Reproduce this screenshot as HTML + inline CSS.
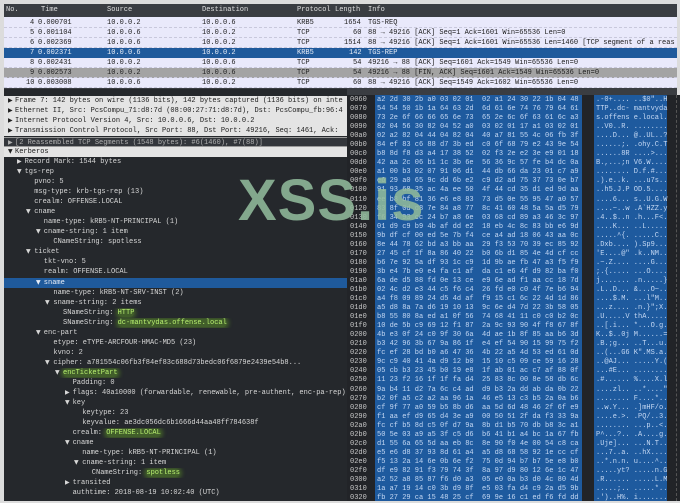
<!DOCTYPE html>
<html><head><meta charset="utf-8"><style>
*{margin:0;padding:0;box-sizing:border-box}
body{width:680px;height:501px;overflow:hidden;background:#dcdcdc;position:relative;font-family:"Liberation Mono","DejaVu Sans Mono",monospace;font-size:7px}
.abs{position:absolute;white-space:pre}
#plist{position:absolute;left:4px;top:4px;width:673px;height:85px;background:#e9e9fb}
#phdr{position:absolute;left:0;top:0;width:673px;height:13px;background:#3a3d42;color:#e0e0e0}
.pr{position:absolute;left:0;width:673px;height:10px;line-height:10px;color:#202020;border-bottom:1px dashed #c8c8dc}
.pr span,#phdr span{position:absolute;white-space:pre}
#detail{position:absolute;left:4px;top:89px;width:343px;height:412px;background:#25282c}
#sb{position:absolute;left:4px;top:88px;width:673px;height:7px;background:#3a3d42}
.dr{position:absolute;left:0;width:343px;height:10.1px;line-height:10px;color:#d8d8d8;white-space:pre;overflow:hidden}
.lt{background:#e4e4e4;color:#202020}
.arr{position:absolute;font-size:6px;font-family:"DejaVu Sans",sans-serif}
#hex{position:absolute;left:347px;top:95px;width:333px;height:406px;background:#222428}
.hl{background:rgba(100,160,40,.45);color:#b8f070;border-radius:4px;box-shadow:0 0 4px 2px rgba(100,160,40,.45)}
.L0{padding-left:11px}.L1{padding-left:20.6px}.L2{padding-left:30.2px}.L3{padding-left:39.8px}.L4{padding-left:49.4px}.L5{padding-left:59px}.L6{padding-left:68.6px}.L7{padding-left:78.2px}.L8{padding-left:87.8px}
</style></head><body>
<div id="plist">
<div id="phdr" style="line-height:13px"><span style="left:2px">No.</span><span style="left:37px">Time</span><span style="left:103px">Source</span><span style="left:198px">Destination</span><span style="left:293px">Protocol</span><span style="left:331px">Length</span><span style="left:364px">Info</span></div>
<div class="pr" style="top:14px"><span style="left:26px">4</span><span style="left:34px">0.000701</span><span style="left:103px">10.0.0.2</span><span style="left:198px">10.0.0.6</span><span style="left:293px">KRB5</span><span style="left:340px">1654</span><span style="left:364px">TGS-REQ</span></div>
<div class="pr" style="top:24px"><span style="left:26px">5</span><span style="left:34px">0.001104</span><span style="left:103px">10.0.0.6</span><span style="left:198px">10.0.0.2</span><span style="left:293px">TCP</span><span style="left:349px">60</span><span style="left:364px">88 → 49216 [ACK] Seq=1 Ack=1601 Win=65536 Len=0</span></div>
<div class="pr" style="top:34px"><span style="left:26px">6</span><span style="left:34px">0.002369</span><span style="left:103px">10.0.0.6</span><span style="left:198px">10.0.0.2</span><span style="left:293px">TCP</span><span style="left:340px">1514</span><span style="left:364px">88 → 49216 [ACK] Seq=1 Ack=1601 Win=65536 Len=1460 [TCP segment of a reas</span></div>
<div class="pr" style="top:44px;background:#1f5a9c;color:#e8eef8;border:none"><span style="left:26px">7</span><span style="left:34px">0.002371</span><span style="left:103px">10.0.0.6</span><span style="left:198px">10.0.0.2</span><span style="left:293px">KRB5</span><span style="left:345px">142</span><span style="left:364px">TGS-REP</span></div>
<div class="pr" style="top:54px"><span style="left:26px">8</span><span style="left:34px">0.002431</span><span style="left:103px">10.0.0.2</span><span style="left:198px">10.0.0.6</span><span style="left:293px">TCP</span><span style="left:349px">54</span><span style="left:364px">49216 → 88 [ACK] Seq=1601 Ack=1549 Win=65536 Len=0</span></div>
<div class="pr" style="top:64px;background:#a3a3a3"><span style="left:26px">9</span><span style="left:34px">0.002573</span><span style="left:103px">10.0.0.2</span><span style="left:198px">10.0.0.6</span><span style="left:293px">TCP</span><span style="left:349px">54</span><span style="left:364px">49216 → 88 [FIN, ACK] Seq=1601 Ack=1549 Win=65536 Len=0</span></div>
<div class="pr" style="top:74px"><span style="left:22px">10</span><span style="left:34px">0.003008</span><span style="left:103px">10.0.0.6</span><span style="left:198px">10.0.0.2</span><span style="left:293px">TCP</span><span style="left:349px">60</span><span style="left:364px">88 → 49216 [ACK] Seq=1549 Ack=1602 Win=65536 Len=0</span></div>
</div>
<div id="sb"></div>
<div id="detail">
<div class="dr lt L0" style="top:7px"><span class="arr" style="left:4px">▶</span>Frame 7: 142 bytes on wire (1136 bits), 142 bytes captured (1136 bits) on inte</div>
<div class="dr lt L0" style="top:17px"><span class="arr" style="left:4px">▶</span>Ethernet II, Src: PcsCompu_71:d8:7d (08:00:27:71:d8:7d), Dst: PcsCompu_fb:96:4</div>
<div class="dr lt L0" style="top:27px"><span class="arr" style="left:4px">▶</span>Internet Protocol Version 4, Src: 10.0.0.6, Dst: 10.0.0.2</div>
<div class="dr lt L0" style="top:37px"><span class="arr" style="left:4px">▶</span>Transmission Control Protocol, Src Port: 88, Dst Port: 49216, Seq: 1461, Ack:</div>
<div class="dr L0" style="top:48px;background:#33363b;color:#b0b0b0;border-top:1px solid #999;border-bottom:1px solid #999"><span class="arr" style="left:4px">▶</span>[2 Reassembled TCP Segments (1548 bytes): #6(1460), #7(88)]</div>
<div class="dr lt L0" style="top:58px"><span class="arr" style="left:4px">▼</span>Kerberos</div>
<div class="dr L1" style="top:68px"><span class="arr" style="left:13px">▶</span>Record Mark: 1544 bytes</div>
<div class="dr L1" style="top:78px"><span class="arr" style="left:13px">▼</span>tgs-rep</div>
<div class="dr L2" style="top:88px">pvno: 5</div>
<div class="dr L2" style="top:98px">msg-type: krb-tgs-rep (13)</div>
<div class="dr L2" style="top:108px">crealm: OFFENSE.LOCAL</div>
<div class="dr L2" style="top:118px"><span class="arr" style="left:22px">▼</span>cname</div>
<div class="dr L3" style="top:128px">name-type: kRB5-NT-PRINCIPAL (1)</div>
<div class="dr L3" style="top:138px"><span class="arr" style="left:32px">▼</span>cname-string: 1 item</div>
<div class="dr L4" style="top:148px">CNameString: spotless</div>
<div class="dr L2" style="top:158px"><span class="arr" style="left:22px">▼</span>ticket</div>
<div class="dr L3" style="top:168px">tkt-vno: 5</div>
<div class="dr L3" style="top:178px">realm: OFFENSE.LOCAL</div>
<div class="dr L3" style="top:189px;background:#1f5a9c;color:#e8eef8"><span class="arr" style="left:32px">▼</span>sname</div>
<div class="dr L4" style="top:199px">name-type: kRB5-NT-SRV-INST (2)</div>
<div class="dr L4" style="top:209px"><span class="arr" style="left:41px">▼</span>sname-string: 2 items</div>
<div class="dr L5" style="top:219px">SNameString: <span class="hl">HTTP</span></div>
<div class="dr L5" style="top:229px">SNameString: <span class="hl">dc-mantvydas.offense.local</span></div>
<div class="dr L3" style="top:239px"><span class="arr" style="left:32px">▼</span>enc-part</div>
<div class="dr L4" style="top:249px">etype: eTYPE-ARCFOUR-HMAC-MD5 (23)</div>
<div class="dr L4" style="top:259px">kvno: 2</div>
<div class="dr L4" style="top:269px"><span class="arr" style="left:41px">▼</span>cipher: a781554c06fb3f84ef83c688d73bedc06f6879e2439e54b8...</div>
<div class="dr L5" style="top:279px"><span class="arr" style="left:51px">▼</span><span class="hl">encTicketPart</span></div>
<div class="dr L6" style="top:289px">Padding: 0</div>
<div class="dr L6" style="top:299px"><span class="arr" style="left:61px">▶</span>flags: 40a10000 (forwardable, renewable, pre-authent, enc-pa-rep)</div>
<div class="dr L6" style="top:309px"><span class="arr" style="left:61px">▼</span>key</div>
<div class="dr L7" style="top:319px">keytype: 23</div>
<div class="dr L7" style="top:329px">keyvalue: ae3dc056dc6b1666d44aa48ff784638f</div>
<div class="dr L6" style="top:339px">crealm: <span class="hl">OFFENSE.LOCAL</span></div>
<div class="dr L6" style="top:349px"><span class="arr" style="left:61px">▼</span>cname</div>
<div class="dr L7" style="top:359px">name-type: kRB5-NT-PRINCIPAL (1)</div>
<div class="dr L7" style="top:369px"><span class="arr" style="left:70px">▼</span>cname-string: 1 item</div>
<div class="dr L8" style="top:379px">CNameString: <span class="hl">spotless</span></div>
<div class="dr L6" style="top:389px"><span class="arr" style="left:61px">▶</span>transited</div>
<div class="dr L6" style="top:399px">authtime: 2018-08-19 10:02:40 (UTC)</div>
</div>
<div id="hex">
<div style="position:absolute;left:28px;top:0;width:207px;height:406px;background:#1e5a9e"></div>
<div style="position:absolute;left:247px;top:0;width:73px;height:406px;background:#1e5a9e"></div>
<div style="position:absolute;left:329px;top:0;width:0;height:406px;border-left:1px dashed #555"></div>
<pre class="abs" style="left:3px;top:1px;line-height:9.05px;color:#c8c8c8;font-family:inherit">0060
0070
0080
0090
00a0
00b0
00c0
00d0
00e0
00f0
0100
0110
0120
0130
0140
0150
0160
0170
0180
0190
01a0
01b0
01c0
01d0
01e0
01f0
0200
0210
0220
0230
0240
0250
0260
0270
0280
0290
02a0
02b0
02c0
02d0
02e0
02f0
0300
0310
0320</pre>
<pre class="abs" style="left:30px;top:1px;line-height:9.05px;color:#c4d8f4;font-family:inherit">a2 2d 30 2b a0 03 02 01  02 a1 24 30 22 1b 04 48
54 54 50 1b 1a 64 63 2d  6d 61 6e 74 76 79 64 61
73 2e 6f 66 66 65 6e 73  65 2e 6c 6f 63 61 6c a3
82 04 56 30 82 04 52 a0  03 02 01 17 a1 03 02 01
02 a2 82 04 44 04 82 04  40 a7 81 55 4c 06 fb 3f
84 ef 83 c6 88 d7 3b ed  c0 6f 68 79 e2 43 9e 54
b8 8d f8 d3 a4 17 38 52  02 f3 2e e2 3e e9 01 18
42 aa 2c 06 b1 1c 3b 6e  56 36 9c 57 fe b4 dc 0a
a1 00 b3 02 07 91 06 d1  44 db 66 da 23 01 c7 a9
e6 29 a0 65 9c dd 6b e2  c9 d2 ad 75 37 73 0e b7
91 93 68 35 ac 4a ee 50  4f 44 cd 35 d1 ed 9d aa
ee b8 bf 81 36 e6 e8 83  73 d5 0e 55 95 47 a0 57
83 8f 0d d8 7e 84 a8 77  8c 41 60 48 5a 5a d5 79
f6 34 93 cc 24 b7 a8 6e  03 68 cd 89 a3 46 3c 97
01 d9 c9 b9 4b af dd e2  18 eb 4c 8c 83 bb e6 9d
9b df cf 00 ed 5e 7b f4  ce a4 ad 18 06 43 aa 0c
8e 44 78 62 bd a3 bb aa  29 f3 53 70 39 ec 85 92
27 45 cf 1f 8a 86 40 22  b0 6b d1 85 4e 4d cf cc
b6 7e 92 5a df 93 1c c9  1d 9b ae fb 47 a3 f5 f9
3b e4 7b e0 e4 fa c1 af  da c1 e6 4f d9 82 ba f0
6a de d5 88 fd 0e 13 ce  e9 6e ad f1 aa cc 18 7d
02 4c d2 e3 44 c5 f6 c4  26 fd e0 c0 4f 7e b6 94
a4 f8 09 89 24 d5 4d af  f9 15 c1 6c 22 4d 1d 86
a5 d8 8a 7a d6 19 10 13  9c 6e d4 7d 22 3b 58 05
b8 55 80 8a ed a1 0f 56  74 68 41 11 c0 c0 b2 0c
10 de 5b c9 69 12 f1 87  2a 9c 93 90 4f f8 67 8f
4b e3 0f 24 c0 9f 30 6a  4d ae 1b 8f 85 aa b6 3d
b3 42 96 3b 67 9a 86 1f  e4 ef 54 90 15 99 75 f2
fc ef 28 bd b0 a6 47 36  4b 22 a5 4d 53 ed 61 0d
9c c9 40 41 4a d9 12 b0  15 10 c5 09 ce 59 16 28
05 cb b3 23 45 b0 19 e8  1f ab 01 ac c7 af 88 0f
11 23 f2 16 1f 1f fa d4  25 83 8c 00 8e 58 db 6c
9a b4 11 d2 7a 6c c4 ad  d9 b3 2a dd ab da 0b 22
b2 0f a5 c2 a2 aa 96 1a  46 e5 13 c3 b5 2a 0a b6
cf 9f 77 a0 59 b5 8b d6  aa 5d 6d 48 46 2f 6f e9
f1 aa ef d9 65 d4 3e a9  00 50 51 2f da f3 33 9a
fc cf b5 8d c5 0f d7 9a  8b d1 b5 70 db b8 3c a1
50 5e 03 a9 a5 3f c5 d6  b6 41 b1 a4 bc 1a 67 fb
d1 55 6a 65 5d aa eb 8c  8e 90 f0 4e 00 54 c8 ca
e5 e6 d8 37 93 8d 61 a4  a5 d8 68 58 92 1e cc cf
f5 13 2a 14 6e 0b 6e f2  75 0d 94 b7 b7 5e e8 b0
df e9 82 91 f3 79 74 3f  8a 97 d9 80 12 6e 1c 47
a2 52 a8 85 87 f6 d0 a3  05 e0 0a b3 d0 4c 80 4d
1a a7 19 14 c0 3b d9 8f  e5 03 fa d4 c9 2a d5 9b
fb 27 29 ca 15 48 25 cf  69 9e 16 c1 ed f6 fd dd</pre>
<pre class="abs" style="left:249px;top:1px;line-height:9.05px;color:#c4d8f4;font-family:inherit">.-0+.... ..$0"..H
TTP..dc- mantvyda
s.offens e.local.
..V0..R. ........
....D... @..UL..?
......;. .ohy.C.T
......8R ....>...
B.,...;n V6.W....
........ D.f.#...
.).e..k. ...u7s..
..h5.J.P OD.5....
....6... s..U.G.W
....~..w .A`HZZ.y
.4..$..n .h...F&lt;.
....K... ..L.....
.....^{. .....C..
.Dxb.... ).Sp9...
'E....@" .k..NM..
.~.Z.... ....G...
;.{..... ...O....
j....... .n.....}
.L..D... &amp;...O~..
....$.M. ...l"M..
...z.... .n.}";X.
.U.....V thA.....
..[.i... *...O.g.
K..$..0j M......=
.B.;g... ..T...u.
..(...G6 K".MS.a.
..@AJ... .....Y.(
...#E... ........
.#...... %....X.l
....zl.. ..*...."
........ F....*..
..w.Y... .]mHF/o.
....e.>. .PQ/..3.
........ ...p..&lt;.
P^...?.. .A....g.
.Uje]... ...N.T..
...7..a. ..hX....
..*.n.n. u....^..
.....yt? .....n.G
.R...... .....L.M
.....;.. .....*..
.')..H%. i.......</pre>
</div>
<div class="abs" style="left:238px;top:166px;font-family:'Liberation Sans',sans-serif;font-weight:bold;font-size:58px;line-height:70px;color:rgba(145,185,155,0.88);letter-spacing:1px">XSS.is</div>
</body></html>
